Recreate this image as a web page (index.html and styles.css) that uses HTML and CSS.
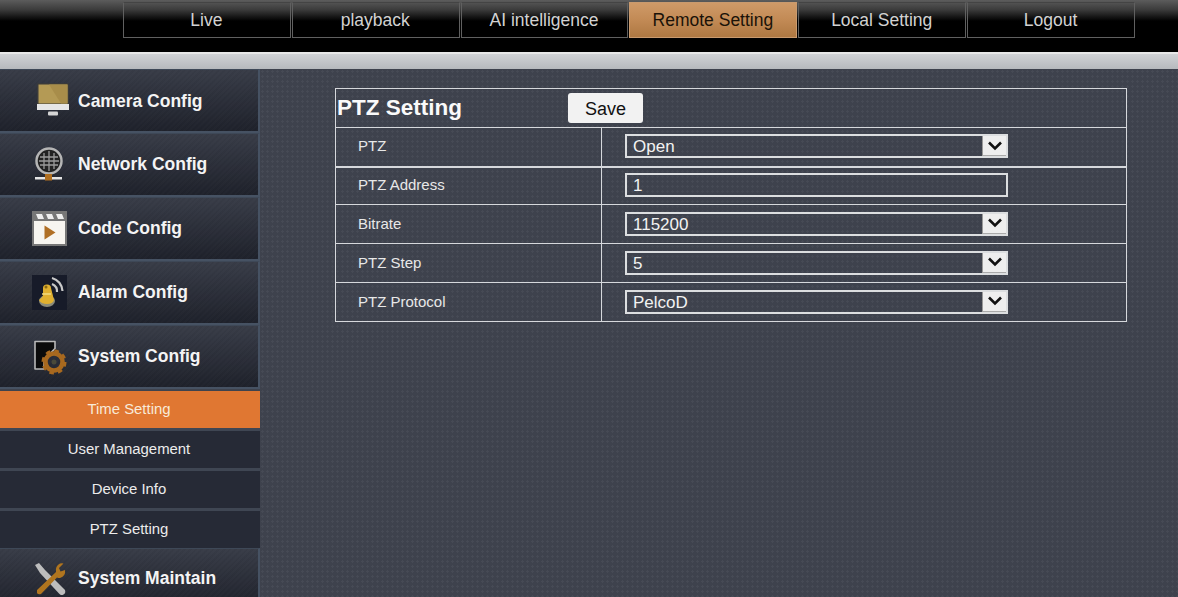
FILE: index.html
```html
<!DOCTYPE html>
<html lang="en">
<head>
<meta charset="utf-8">
<title>PTZ Setting</title>
<link rel="stylesheet" href="styles.css">
</head>
<body>
<header class="topbar">
  <nav class="tabs">
    <a class="tab">Live</a>
    <a class="tab">playback</a>
    <a class="tab">AI intelligence</a>
    <a class="tab active">Remote Setting</a>
    <a class="tab">Local Setting</a>
    <a class="tab">Logout</a>
  </nav>
</header>
<div class="strip"></div>
<div class="main">
  <aside class="sidebar">
    <div class="group first">
      <svg class="ico" viewBox="0 0 36 36"><rect x="5" y="-1" width="32" height="27" rx="1.500" fill="#3a3a3a"/><rect x="6.500" y="0.500" width="29" height="19" fill="#b49a55"/><path d="M17 .5h18.500v19H29z" fill="#a88d4a"/><rect x="5" y="20" width="32" height="6" fill="#e6e6e6"/><rect x="16" y="27.500" width="10" height="4" rx="1" fill="#d5d5d5"/></svg>
      <span>Camera Config</span>
    </div>
    <div class="group">
      <svg class="ico" viewBox="0 0 36 36"><circle cx="17" cy="14" r="12.500" fill="#222" stroke="#b5b5b5" stroke-width="2.500"/><path d="M8 10h18M7 14h20M8 18h18M12 6v16M17 4v20M22 6v16" stroke="#9a9a9a" stroke-width="1.300" fill="none"/><rect x="3" y="30" width="27" height="2.500" fill="#e5e5e5"/><rect x="13" y="27" width="7" height="6.500" fill="#b06f20"/></svg>
      <span>Network Config</span>
    </div>
    <div class="group">
      <svg class="ico" viewBox="0 0 36 36"><rect x="0" y="0" width="35" height="35" fill="#777"/><rect x="2" y="10" width="31" height="23" fill="#f7f5f0"/><path d="M4 3h6l2 5H6zM14 3h6l2 5h-6zM24 3h6l2 5h-6z" fill="#eee"/><path d="M12.500 14.500l11 7-11 7z" fill="#b06f25"/></svg>
      <span>Code Config</span>
    </div>
    <div class="group">
      <svg class="ico" viewBox="0 0 36 36"><rect width="35" height="35" fill="#171b29"/><path d="M20 9a8 8 0 0 1 5 8M20 3a14 14 0 0 1 10.500 13" stroke="#c9c9c9" stroke-width="2.200" fill="none"/><ellipse cx="15" cy="26" rx="8" ry="6" fill="#8b8b7a"/><path d="M11 13q0-3.500 4-3.500t4 3.500l3 12q-1 4-7 4t-8-4q4-3 4-5z" fill="#e0b030"/><path d="M10 19h9" stroke="#f3dc80" stroke-width="1.500"/><circle cx="14" cy="12" r="1.500" fill="#8b6a12"/></svg>
      <span>Alarm Config</span>
    </div>
    <div class="group">
      <svg class="ico" viewBox="0 0 36 36"><path d="M3 2.500h20v7l-5 5-6 6V30H3z" fill="#0b0b0b" stroke="#b8b8b8" stroke-width="1.600" stroke-linejoin="round"/><circle cx="22" cy="23" r="8.500" fill="none" stroke="#a8691f" stroke-width="4.500"/><circle cx="22" cy="23" r="11" fill="none" stroke="#a8691f" stroke-width="3" stroke-dasharray="4.500 4.140"/><circle cx="22" cy="23" r="2.500" fill="#4a4a3a"/></svg>
      <span>System Config</span>
    </div>
    <ul class="sublist">
      <li class="sub current">Time Setting</li>
      <li class="sub">User Management</li>
      <li class="sub">Device Info</li>
      <li class="sub">PTZ Setting</li>
    </ul>
    <div class="group last">
      <svg class="ico" viewBox="0 0 36 36"><path d="M3 4l4-2 6 7 20 20q1 3-1.500 4.500t-4.500-1L8 12z" fill="#bdbdbd"/><path d="M5 29L24 11q-1-6 4-8.500 2-.5 3.500 0L27 7l1.500 3.500L33 9q1 6-5 8-2 0-3-.5L9 33q-3 1-4-1z" fill="#b0751f"/></svg>
      <span>System Maintain</span>
    </div>
  </aside>
  <section class="content">
    <table class="form">
      <colgroup><col class="col-lab"><col></colgroup>
      <tr class="head">
        <th colspan="2"><div class="head-in"><span class="title">PTZ Setting</span><button class="save">Save</button></div></th>
      </tr>
      <tr><td class="lab">PTZ</td><td class="val"><div class="field">Open<span class="arrow"><svg viewBox="0 0 22 22"><path d="M5 7.500l6 6 6-6" fill="none" stroke="#111" stroke-width="2.600"/></svg></span></div></td></tr>
      <tr class="thick"><td class="lab">PTZ Address</td><td class="val"><div class="field">1</div></td></tr>
      <tr><td class="lab">Bitrate</td><td class="val"><div class="field">115200<span class="arrow"><svg viewBox="0 0 22 22"><path d="M5 7.500l6 6 6-6" fill="none" stroke="#111" stroke-width="2.600"/></svg></span></div></td></tr>
      <tr><td class="lab">PTZ Step</td><td class="val"><div class="field">5<span class="arrow"><svg viewBox="0 0 22 22"><path d="M5 7.500l6 6 6-6" fill="none" stroke="#111" stroke-width="2.600"/></svg></span></div></td></tr>
      <tr><td class="lab">PTZ Protocol</td><td class="val"><div class="field">PelcoD<span class="arrow"><svg viewBox="0 0 22 22"><path d="M5 7.500l6 6 6-6" fill="none" stroke="#111" stroke-width="2.600"/></svg></span></div></td></tr>
    </table>
  </section>
</div>
</body>
</html>
```
FILE: styles.css
```css
* { box-sizing: border-box; }
html, body { margin: 0; height: 597px; overflow: hidden; }
body { font-family: "Liberation Sans", Arial, sans-serif; background: #3f434e; color: #fff; }

.topbar {
  height: 52px;
  padding: 2px 0 0 123px;
  background: linear-gradient(#5c5c5c 0, #3a3a3a 10px, #000 21px, #000 100%);
}
.tabs { display: flex; width: 1012px; height: 36px; }
.tab {
  flex: 1;
  display: flex;
  align-items: center;
  justify-content: center;
  border: 1px solid #606060;
  border-top-color: #444;
  margin-right: 1px;
  font-size: 17.500px;
  color: #d2d2d2;
  padding: 1px 1px 0 0;
}
.tab:last-child { margin-right: 0; }
.tab.active {
  background: linear-gradient(#cf9a68 0, #c28a55 50%, #ae7842 100%);
  border-color: #c99a6e;
  color: #1a1208;
}

.strip {
  height: 17px;
  border-top: 2px solid #e8e8e8;
  background: linear-gradient(#d0d2d5, #b6b9bd);
}

.main { display: flex; height: 528px; }

.sidebar { width: 260px; flex: none; }
.group {
  height: 64px;
  display: flex;
  align-items: center;
  gap: 10px;
  padding: 0 0 0 32px;
  border-top: 1px solid #3e4857;
  border-right: 2px solid #465263;
  border-bottom: 2px solid #465263;
  background:
    repeating-linear-gradient(135deg, rgba(255,255,255,.012) 0 2px, rgba(0,0,0,.012) 2px 4px),
    linear-gradient(#383c47, #1e212b);
  font-size: 17.500px;
  font-weight: bold;
  color: #f4f4f4;
}
.ico { width: 36px; height: 36px; flex: none; overflow: visible; }
.group.first { padding-top: 2px; }
.group.last { height: 60px; border-bottom: 0; }

.sublist { list-style: none; margin: 0; padding: 0; }
.sub {
  height: 40px;
  display: flex;
  align-items: center;
  justify-content: center;
  background: #262a36;
  border-bottom: 3px solid #3f4653;
  padding: 0 2px 1px 0;
  font-size: 14.900px;
  color: #ececec;
}
.sub.current { background: #e07732; color: #f8ead8; margin-top: 2px; }
.sub:last-child { border-bottom: 0; height: 37px; }

.content {
  flex: 1;
  padding: 19px 0 0 75px;
  background-color: #3e424d;
  background-image:
    radial-gradient(circle, rgba(255,255,255,.045) 1px, transparent 1.300px);
  background-size: 5px 5px;
}
.form {
  width: 792px;
  border-collapse: collapse;
  table-layout: fixed;
}
.col-lab { width: 266px; }
.form td, .form th { border: 1px solid #d6d8dc; padding: 0; }
.form tr { height: 39px; }
.form tr.thick { height: 38px; }
.thick td { border-top-width: 2px; }
.head th { text-align: left; }
.head-in { display: flex; align-items: center; padding-left: 1px; }
.title { width: 231px; font-size: 22.500px; font-weight: bold; color: #fafafa; }
.save {
  width: 75px;
  height: 30px;
  border: 0;
  border-radius: 3px;
  background: #f2f2f2;
  color: #111;
  font: 18px "Liberation Sans", Arial, sans-serif;
  padding: 3px 0 0;
}
.form .lab { padding: 0 0 2px 22px; font-size: 15px; color: #e8e8e8; }
.form .val { padding: 0 0 1px 23px; }
.field {
  position: relative;
  width: 383px;
  height: 24px;
  border: 2px solid #dcdee0;
  padding-left: 6px;
  font-size: 17px;
  line-height: 21px;
  color: #f2f2f2;
}
.arrow {
  position: absolute;
  top: 0;
  right: 0;
  width: 24px;
  height: 20px;
  background: #eeeeee;
  border-left: 1px solid #999;
  border-bottom: 1px solid #aaa;
  display: flex;
  align-items: center;
  justify-content: center;
}
.arrow svg { width: 22px; height: 22px; }
```
